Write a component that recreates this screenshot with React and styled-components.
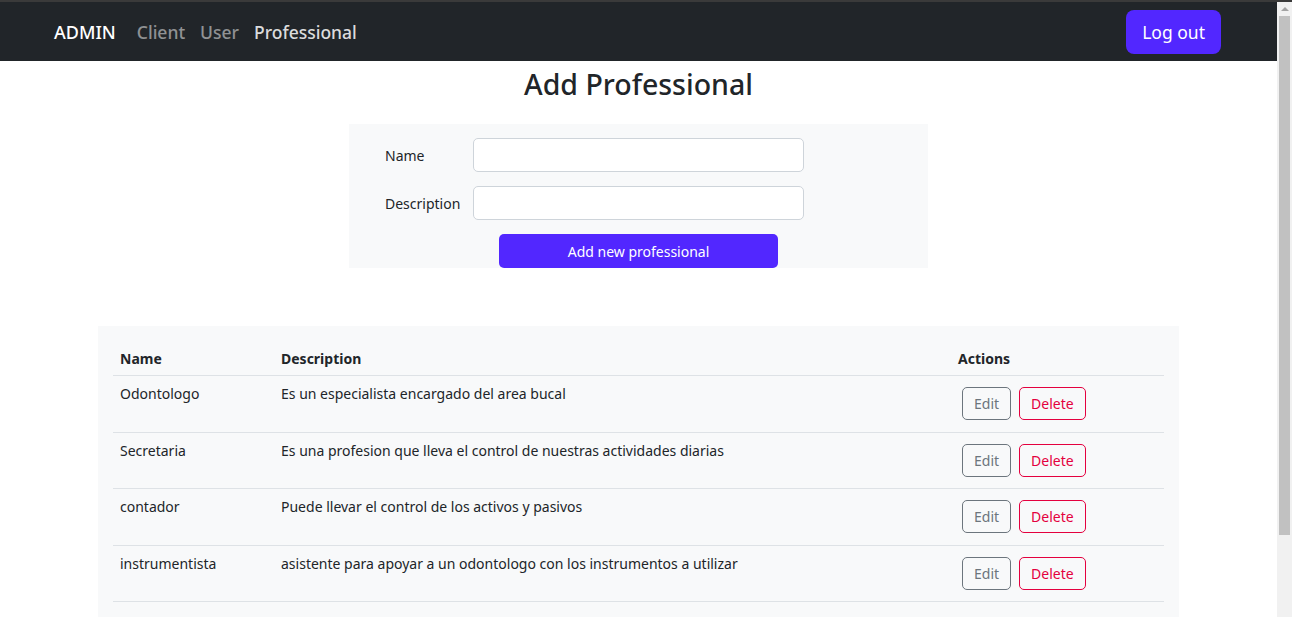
import styled, { createGlobalStyle } from 'styled-components';

const GlobalStyle = createGlobalStyle`
	* { box-sizing: border-box; }
	html { border-top: 2px solid #3a3a3a; }
	body {
		margin: 0;
		padding-right: 15px;
		font-family: 'Noto Sans', 'Open Sans', sans-serif;
		color: #212529;
		background: #fff;
	}
`;

// classic browser scrollbar, drawn over the right edge
const Scrollbar = styled.div`
	position: fixed;
	top: 2px;
	right: 0;
	bottom: 0;
	width: 15px;
	background: #f1f1f1;
	display: flex;
	flex-direction: column;
	align-items: center;
`;
const ScrollArrow = styled.div`
	margin-top: 5px;
	width: 0;
	height: 0;
	border-left: 4px solid transparent;
	border-right: 4px solid transparent;
	border-bottom: 4px solid #a3a3a3;
`;
const ScrollThumb = styled.div`
	margin-top: 5px;
	width: 11px;
	height: 519px;
	background: #c1c1c1;
`;

const Navbar = styled.nav`
	display: flex;
	align-items: center;
	justify-content: space-between;
	height: 59px;
	padding: 0 56px 0 54px;
	background-color: #212529;
`;
const NavLeft = styled.div`
	display: flex;
	align-items: center;
`;
const Brand = styled.a`
	color: #fff;
	font-size: 18px;
	font-weight: 500;
	margin-right: 21px;
	text-decoration: none;
`;
const NavLink = styled.a`
	color: ${(props) => (props.$active ? 'rgba(255,255,255,0.85)' : 'rgba(255,255,255,0.5)')};
	font-size: 17.5px;
	font-weight: 500;
	margin-right: 15px;
	text-decoration: none;
`;
const LogoutButton = styled.button`
	height: 44px;
	padding: 0 16px;
	border: none;
	border-radius: 8px;
	background-color: #5227ff;
	color: #fff;
	font-family: inherit;
	font-size: 17.5px;
	cursor: pointer;
`;

const Main = styled.main`
	display: flex;
	flex-direction: column;
	align-items: center;
	padding-bottom: 80px;
`;
const Title = styled.h1`
	margin: 5px 0 22px;
	font-size: 28.5px;
	font-weight: 500;
	line-height: 36px;
`;
const FormBox = styled.form`
	width: 579px;
	padding: 14px 36px 0;
	background-color: #f8f9fa;
	display: flex;
	flex-direction: column;
`;
const FormRow = styled.div`
	display: flex;
	align-items: center;
	margin-bottom: 14px;
`;
const Label = styled.label`
	width: 88px;
	font-size: 14px;
`;
const Input = styled.input`
	width: 331px;
	height: 34px;
	border: 1px solid #ced4da;
	border-radius: 5px;
	background: #fff;
	padding: 0 10px;
	font-family: inherit;
`;
const SubmitButton = styled.button`
	align-self: flex-start;
	margin-left: 114px;
	width: 279px;
	height: 34px;
	border: none;
	border-radius: 5px;
	background-color: #5227ff;
	color: #fff;
	font-family: inherit;
	font-size: 14px;
	cursor: pointer;
`;

const TableBox = styled.div`
	width: 1081px;
	margin-top: 58px;
	padding: 15px 15px 16px;
	background-color: #f8f9fa;
`;
const Table = styled.table`
	width: 100%;
	border-collapse: collapse;
	font-size: 14px;
`;
const Th = styled.th`
	text-align: left;
	font-weight: 700;
	padding: 9px 7px 8px;
	line-height: 17px;
	border-bottom: 1px solid #dee2e6;
	width: ${(props) => props.$width || 'auto'};
`;
const Td = styled.td`
	vertical-align: top;
	padding: 8px 7px;
	line-height: 19px;
	border-bottom: 1px solid #dee2e6;
`;
const ActionButton = styled.button`
	height: 33px;
	margin: 3px 4px 3.5px;
	padding: 0 11px;
	background: transparent;
	border: 1px solid ${(props) => props.$color};
	border-radius: 5px;
	color: ${(props) => props.$color};
	font-family: inherit;
	font-size: 14px;
	cursor: pointer;
`;

const professionals = [
	{ name: 'Odontologo', description: 'Es un especialista encargado del area bucal' },
	{ name: 'Secretaria', description: 'Es una profesion que lleva el control de nuestras actividades diarias' },
	{ name: 'contador', description: 'Puede llevar el control de los activos y pasivos' },
	{ name: 'instrumentista', description: 'asistente para apoyar a un odontologo con los instrumentos a utilizar' },
];

const App = () => {
	return (
		<div>
			<GlobalStyle />
			<Navbar>
				<NavLeft>
					<Brand href="#">ADMIN</Brand>
					<NavLink href="#">Client</NavLink>
					<NavLink href="#">User</NavLink>
					<NavLink href="#" $active>Professional</NavLink>
				</NavLeft>
				<LogoutButton>Log out</LogoutButton>
			</Navbar>
			<Main>
				<Title>Add Professional</Title>
				<FormBox onSubmit={(e) => e.preventDefault()}>
					<FormRow>
						<Label>Name</Label>
						<Input type="text" />
					</FormRow>
					<FormRow>
						<Label>Description</Label>
						<Input type="text" />
					</FormRow>
					<SubmitButton type="submit">Add new professional</SubmitButton>
				</FormBox>
				<TableBox>
					<Table>
						<thead>
							<tr>
								<Th $width="161px">Name</Th>
								<Th $width="677px">Description</Th>
								<Th>Actions</Th>
							</tr>
						</thead>
						<tbody>
							{professionals.map((p) => (
								<tr key={p.name}>
									<Td>{p.name}</Td>
									<Td>{p.description}</Td>
									<Td>
										<ActionButton $color="#6c757d">Edit</ActionButton>
										<ActionButton $color="#e4003f">Delete</ActionButton>
									</Td>
								</tr>
							))}
						</tbody>
					</Table>
				</TableBox>
			</Main>
			<Scrollbar>
				<ScrollArrow />
				<ScrollThumb />
			</Scrollbar>
		</div>
	);
};

export default App;
